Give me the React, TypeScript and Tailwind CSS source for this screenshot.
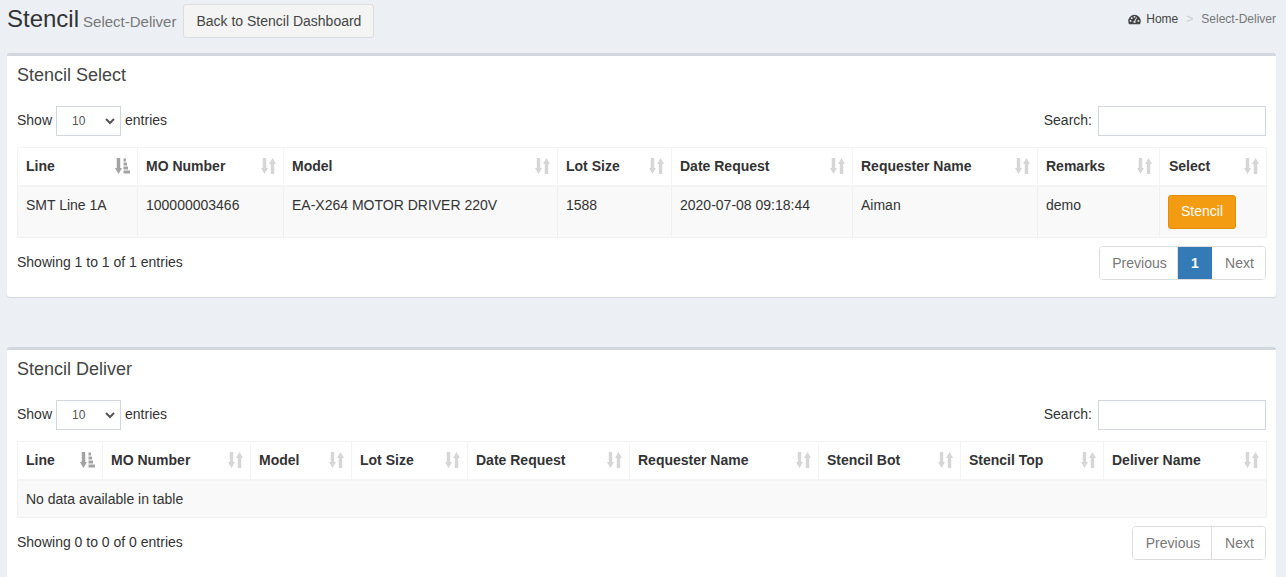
const th = "relative border border-[#f4f4f4] border-b-2 px-[8px] h-[38px] text-left text-[14px] font-bold text-[#333]";
const td = "border border-[#f0f0f0] px-[8px] align-top text-[14px] text-[#333]";

function SortIcon() {
  return (
    <svg viewBox="0 0 15 16" className="absolute right-[7px] top-[10px] h-[16px] w-[15px] text-[#d6d6d6]" fill="currentColor">
      <path d="M1.750 0h3.500v10H7l-3.500 6L0 10h1.750z" />
      <path d="M9.750 16h3.500V6H15L11.500 0 8 6h1.750z" />
    </svg>
  );
}

function SortedIcon() {
  return (
    <svg viewBox="0 0 15 16" className="absolute right-[7px] top-[10px] h-[16px] w-[15px] text-[#a3a3a3]" fill="currentColor">
      <path d="M1.750 0h3.500v10H7l-3.500 6L0 10h1.750z" />
      <rect x="8.500" y="0.500" width="2.500" height="3" />
      <rect x="8.500" y="4.500" width="3.500" height="3" />
      <rect x="8.500" y="8.500" width="4.500" height="3" />
      <rect x="8.500" y="12.500" width="6.500" height="3" />
    </svg>
  );
}

function Toolbar() {
  return (
    <div className="mt-[21px] flex h-[30px] items-center justify-between text-[14px] text-[#333]">
      <div className="flex items-center">
        <span className="pb-[2px]">Show</span>
        <div className="relative mx-[4px] h-[30px] w-[65px] border border-[#d2d6de] bg-white">
          <span className="absolute left-[15px] top-[5px] text-[12px] text-[#555]">10</span>
          <svg viewBox="0 0 12 12" className="absolute right-[4px] top-[8px] h-[12px] w-[12px]" fill="none" stroke="#555" strokeWidth="2">
            <path d="M2 4l4 4 4-4" />
          </svg>
        </div>
        <span className="pb-[2px]">entries</span>
      </div>
      <div className="flex items-center">
        <span className="pb-[2px]">Search:</span>
        <div className="ml-[6px] h-[30px] w-[168px] border border-[#d2d6de] bg-white" />
      </div>
    </div>
  );
}

function Pager({ active }: { active: boolean }) {
  return (
    <div className="flex h-[34px] overflow-hidden rounded-[4px] border border-[#ddd] text-[14px] text-[#777]">
      <span className={active ? "flex w-[78px] items-center justify-center border-r border-[#ddd] bg-white pl-[2px]" : "flex w-[79px] items-center justify-center border-r border-[#ddd] bg-white pl-[2px]"}>Previous</span>
      {active && <span className="flex w-[34px] items-center justify-center bg-[#337ab7] font-bold text-white">1</span>}
      <span className="flex w-[53px] items-center justify-center bg-white pl-[2px]">Next</span>
    </div>
  );
}

const selectCols = [
  { name: "Line", w: "w-[120px]" },
  { name: "MO Number", w: "w-[146px]" },
  { name: "Model", w: "w-[274px]" },
  { name: "Lot Size", w: "w-[114px]" },
  { name: "Date Request", w: "w-[181px]" },
  { name: "Requester Name", w: "w-[185px]" },
  { name: "Remarks", w: "w-[122px]" },
  { name: "Select", w: "w-[107px] pl-[9px]" },
];

const deliverCols = [
  { name: "Line", w: "w-[85px]" },
  { name: "MO Number", w: "w-[148px]" },
  { name: "Model", w: "w-[101px]" },
  { name: "Lot Size", w: "w-[116px]" },
  { name: "Date Request", w: "w-[162px]" },
  { name: "Requester Name", w: "w-[189px]" },
  { name: "Stencil Bot", w: "w-[142px]" },
  { name: "Stencil Top", w: "w-[143px]" },
  { name: "Deliver Name", w: "w-[163px]" },
];

function Head({ cols }: { cols: { name: string; w: string }[] }) {
  return (
    <thead>
      <tr>
        {cols.map((c, i) => (
          <th key={c.name} className={`${th} ${c.w}`}>
            {c.name}
            {i === 0 ? <SortedIcon /> : <SortIcon />}
          </th>
        ))}
      </tr>
    </thead>
  );
}

export default function App() {
  return (
    <div className="h-[577px] overflow-hidden bg-[#ecf0f5] font-['Liberation_Sans',Arial,sans-serif] text-[14px] text-[#333]">
      <header className="flex h-[53px] items-start justify-between pl-[7px] pr-[10px]">
        <div className="flex items-start pt-[4px]">
          <h1 className="text-[24px] leading-[30px] text-[#333]">Stencil</h1>
          <span className="ml-[4px] mt-[9px] text-[15px] leading-[18px] text-[#777]">Select-Deliver</span>
          <button className="ml-[7px] h-[34px] rounded-[3px] border border-[#ddd] bg-[#f4f4f4] px-[12px] text-[14px] text-[#444]">
            Back to Stencil Dashboard
          </button>
        </div>
        <div className="flex items-center pt-[10px] text-[12px]">
          <svg viewBox="0 0 16 14" className="mr-[5px] h-[11px] w-[13px] text-[#444]" fill="currentColor">
            <path fillRule="evenodd" d="M8 1a8 8 0 0 0-8 8c0 1.500.4 2.900 1.100 4h13.800A8 8 0 0 0 16 9a8 8 0 0 0-8-8zM3 10a1.200 1.200 0 1 1 0-2.400A1.200 1.200 0 0 1 3 10zm1.500-3.500a1.200 1.200 0 1 1 0-2.400 1.200 1.200 0 0 1 0 2.400zM8 4.800a1.200 1.200 0 1 1 0-2.400 1.200 1.200 0 0 1 0 2.400zm1.300 6.200H6.700a1.500 1.500 0 0 1 1-2L10.500 4l.8.4L9 9.200c.3.500.4 1.200.3 1.800zM13 10a1.200 1.200 0 1 1 0-2.400 1.200 1.200 0 0 1 0 2.400z" />
          </svg>
          <span className="text-[#444]">Home</span>
          <span className="mx-[8px] text-[#ccc]">&gt;</span>
          <span className="text-[#777]">Select-Deliver</span>
        </div>
      </header>

      <section className="ml-[7px] mr-[10px] h-[244px] rounded-[3px] border-t-[3px] border-[#d2d6de] bg-white px-[10px] shadow-[0_1px_1px_rgba(0,0,0,0.1)]">
        <h3 className="pt-[9px] text-[18px] leading-[20px] text-[#444]">Stencil Select</h3>
        <Toolbar />
        <table className="mt-[11px] w-[1249px] table-fixed border-collapse">
          <Head cols={selectCols} />
          <tbody>
            <tr className="h-[52px] bg-[#f9f9f9]">
              <td className={`${td} pt-[8px]`}>SMT Line 1A</td>
              <td className={`${td} pt-[8px]`}>100000003466</td>
              <td className={`${td} pt-[8px]`}>EA-X264 MOTOR DRIVER 220V</td>
              <td className={`${td} pt-[8px]`}>1588</td>
              <td className={`${td} pt-[8px]`}>2020-07-08 09:18:44</td>
              <td className={`${td} pt-[8px]`}>Aiman</td>
              <td className={`${td} pt-[8px]`}>demo</td>
              <td className={`${td} pt-[8px]`}>
                <button className="h-[34px] w-[68px] rounded-[3px] border border-[#e08e0b] bg-[#f39c12] text-[14px] text-white">
                  Stencil
                </button>
              </td>
            </tr>
          </tbody>
        </table>
        <div className="mt-[8px] flex items-start justify-between">
          <span className="pt-[6px]">Showing 1 to 1 of 1 entries</span>
          <Pager active />
        </div>
      </section>

      <section className="ml-[7px] mr-[10px] mt-[50px] h-[240px] rounded-[3px] border-t-[3px] border-[#d2d6de] bg-white px-[10px] shadow-[0_1px_1px_rgba(0,0,0,0.1)]">
        <h3 className="pt-[9px] text-[18px] leading-[20px] text-[#444]">Stencil Deliver</h3>
        <Toolbar />
        <table className="mt-[11px] w-[1249px] table-fixed border-collapse">
          <Head cols={deliverCols} />
          <tbody>
            <tr className="h-[38px] bg-[#f9f9f9]">
              <td colSpan={9} className={`${td} !align-middle pt-[2px]`}>No data available in table</td>
            </tr>
          </tbody>
        </table>
        <div className="mt-[8px] flex items-start justify-between">
          <span className="pt-[6px]">Showing 0 to 0 of 0 entries</span>
          <Pager active={false} />
        </div>
      </section>
    </div>
  );
}
